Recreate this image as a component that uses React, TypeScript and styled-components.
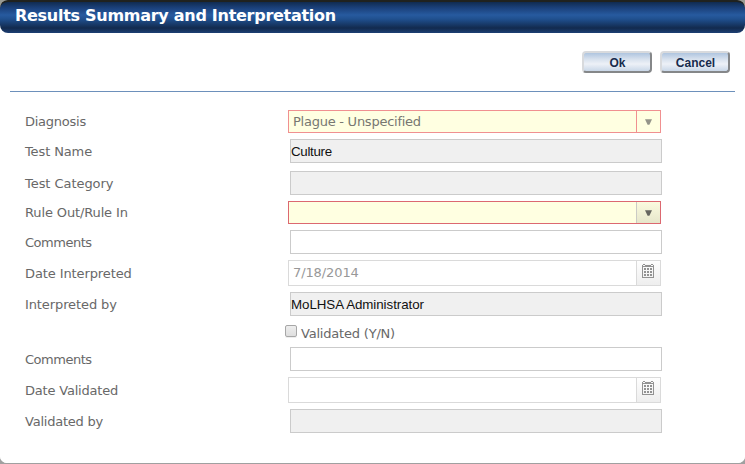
import React from "react";
import styled, { createGlobalStyle } from "styled-components";

const GlobalStyle = createGlobalStyle`
  * { box-sizing: border-box; }
  body { margin: 0; background: #a0a0a0; overflow: hidden; }
`;

const ui = `"DejaVu Sans", sans-serif`;

const Backdrop = styled.div`
  width: 745px;
  height: 464px;
  background: linear-gradient(#999b94 0, #999b94 8px, #a0a0a0 9px);
`;

const Dialog = styled.main`
  height: 463px;
  border-radius: 7px;
  overflow: hidden;
  background: linear-gradient(#999b94 0, #999b94 12px, #fff 12px);
`;

const TitleBar = styled.header`
  height: 33px;
  border-top: 2px solid #20221f;
  border-radius: 8px;
  background: linear-gradient(#102b50 0, #1b417b 6px, #275a9f 13px, #20508f 17px, #122a4e 26px, #1d3f73 31px);
  padding-left: 15px;
  display: flex;
  align-items: center;
`;

const Title = styled.h1`
  margin: -4px 0 0;
  font: bold 16px/24px ${ui};
  letter-spacing: -0.28px;
  color: #fff;
  white-space: nowrap;
`;

const Sheet = styled.section`
  height: 430px;
  background: #fff;
`;

const Toolbar = styled.div`
  height: 59px;
  margin: 0 10px;
  padding: 18px 5px 0 0;
  border-bottom: 1px solid #6d90bb;
  display: flex;
  justify-content: flex-end;
  gap: 8px;
`;

const Button = styled.button`
  width: 70px;
  height: 22px;
  padding: 3px 0 0 1px;
  border: 2px solid;
  border-color: #d8dadd #858789 #858789 #d8dadd;
  border-radius: 4px;
  background: linear-gradient(#afc5df 0, #d6e0ed 6px, #edf1f7 11px, #c9d7e8 18px);
  color: #172b4d;
  font: bold 12px/15px "Liberation Sans", sans-serif;
`;

const Form = styled.div`
  padding: 18px 0 0 25px;
  display: flex;
  flex-direction: column;
`;

const Row = styled.div<{ $gap?: number; $picker?: boolean }>`
  margin-top: ${(p) => p.$gap ?? 0}px;
  display: grid;
  grid-template-columns: ${(p) => (p.$picker ? 263 : 265)}px auto;
  justify-content: start;
  align-items: center;
`;

const Label = styled.label<{ $track?: number; $drop?: number }>`
  padding-top: ${(p) => p.$drop ?? 2}px;
  font: 13px/16px ${ui};
  letter-spacing: ${(p) => p.$track ?? 0}px;
  color: #686868;
  white-space: nowrap;
`;

const TextField = styled.div<{ $readOnly?: boolean; $track?: number }>`
  width: 372px;
  height: 24px;
  padding-top: 1px;
  border: 1px solid #cbcbcb;
  background: ${(p) => (p.$readOnly ? "#f0f0f0" : "#fff")};
  color: #111;
  font: 13.33px/22px "Liberation Sans", sans-serif;
  letter-spacing: ${(p) => p.$track ?? 0}px;
`;

type Kind = "disabled" | "required" | "date";

const Picker = styled.div<{ $kind: Kind }>`
  width: 373px;
  height: ${(p) => (p.$kind === "date" ? 26 : 23)}px;
  border: 1px solid ${(p) => ({ disabled: "#f09090", required: "#dc6870", date: "#dadada" })[p.$kind]};
  background: ${(p) => (p.$kind === "date" ? "#fff" : "#ffffe1")};
  display: grid;
  grid-template-columns: 1fr 24px;
`;

const Value = styled.span<{ $track?: number; $muted?: boolean }>`
  padding-left: 4px;
  align-self: center;
  font: 13px/16px ${ui};
  letter-spacing: ${(p) => p.$track ?? 0}px;
  color: ${(p) => (p.$muted ? "#989898" : "#777771")};
`;

const Trigger = styled.span<{ $kind: Kind }>`
  border-left: 1px solid ${(p) => ({ disabled: "#f09090", required: "#cbcbc5", date: "#dadada" })[p.$kind]};
  background: ${(p) =>
    ({
      disabled: "#ffffe1",
      required: "linear-gradient(#fbfbdf, #e6e6cb)",
      date: "linear-gradient(#fefefe, #eeeeee)",
    })[p.$kind]};
  display: flex;
  align-items: flex-start;
  padding: ${(p) => (p.$kind === "date" ? "3px 0 0 5px" : "8px 0 0 8px")};
`;

const CheckBox = styled.span`
  width: 12px;
  height: 12px;
  margin-bottom: 4px;
  border: 1px solid #a7a7a7;
  border-radius: 2px;
  background: linear-gradient(#ededed, #dedede);
  box-shadow: 0 1px 0 #eee;
`;

const CheckRow = styled.div`
  height: 18px;
  margin: 8px 0 5px 260px;
  display: flex;
  align-items: center;
  gap: 4px;
`;

const Arrow = ({ color }: { color: string }) => (
  <svg width="7" height="6" viewBox="0 0 7 6" fill={color}>
    <path d="M0 0.3H7L4.4 5.8H2.6Z" />
  </svg>
);

const Calendar = () => (
  <svg width="12" height="15" viewBox="0 0 12 15" shapeRendering="crispEdges" fill="#929292">
    <path d="M0 1H12V14H0ZM1 3V13H11V3Z" fillRule="evenodd" />
    <path d="M0 0H12V1H0ZM1 1H3V2H1ZM9 1H11V2H9Z" fill="#f8f8f8" />
    <path d="M1 0H3V1H1ZM9 0H11V1H9Z" />
    {[4, 7, 10].map((y) =>
      [2, 5, 8].map((x) => <rect key={`${x}-${y}`} x={x} y={y} width="2" height="2" />)
    )}
  </svg>
);

const DateField = ({ value }: { value?: string }) => (
  <Picker $kind="date">
    <Value $muted $track={-0.1}>{value}</Value>
    <Trigger $kind="date"><Calendar /></Trigger>
  </Picker>
);

export default function App() {
  return (
    <Backdrop>
      <GlobalStyle />
      <Dialog>
        <TitleBar><Title>Results Summary and Interpretation</Title></TitleBar>
        <Sheet>
          <Toolbar>
            <Button>Ok</Button>
            <Button>Cancel</Button>
          </Toolbar>
          <Form>
            <Row $picker>
              <Label $track={-0.25} $drop={0}>Diagnosis</Label>
              <Picker $kind="disabled">
                <Value $track={-0.25}>Plague - Unspecified</Value>
                <Trigger $kind="disabled"><Arrow color="#949489" /></Trigger>
              </Picker>
            </Row>
            <Row $gap={6}><Label $track={-0.12}>Test Name</Label><TextField $readOnly $track={-0.3}>Culture</TextField></Row>
            <Row $gap={8}><Label $track={-0.05}>Test Category</Label><TextField $readOnly /></Row>
            <Row $gap={6} $picker>
              <Label $track={-0.13} $drop={0}>Rule Out/Rule In</Label>
              <Picker $kind="required">
                <Value />
                <Trigger $kind="required"><Arrow color="#65655f" /></Trigger>
              </Picker>
            </Row>
            <Row $gap={6}><Label $track={-0.48}>Comments</Label><TextField /></Row>
            <Row $gap={6} $picker><Label $track={-0.1}>Date Interpreted</Label><DateField value="7/18/2014" /></Row>
            <Row $gap={6}><Label $track={-0.1}>Interpreted by</Label><TextField $readOnly $track={-0.06}>MoLHSA Administrator</TextField></Row>
            <CheckRow><CheckBox /><Label $track={-0.2}>Validated (Y/N)</Label></CheckRow>
            <Row><Label $track={-0.48}>Comments</Label><TextField /></Row>
            <Row $gap={6} $picker><Label $track={-0.2}>Date Validated</Label><DateField /></Row>
            <Row $gap={6}><Label $track={-0.23}>Validated by</Label><TextField $readOnly /></Row>
          </Form>
        </Sheet>
      </Dialog>
    </Backdrop>
  );
}
